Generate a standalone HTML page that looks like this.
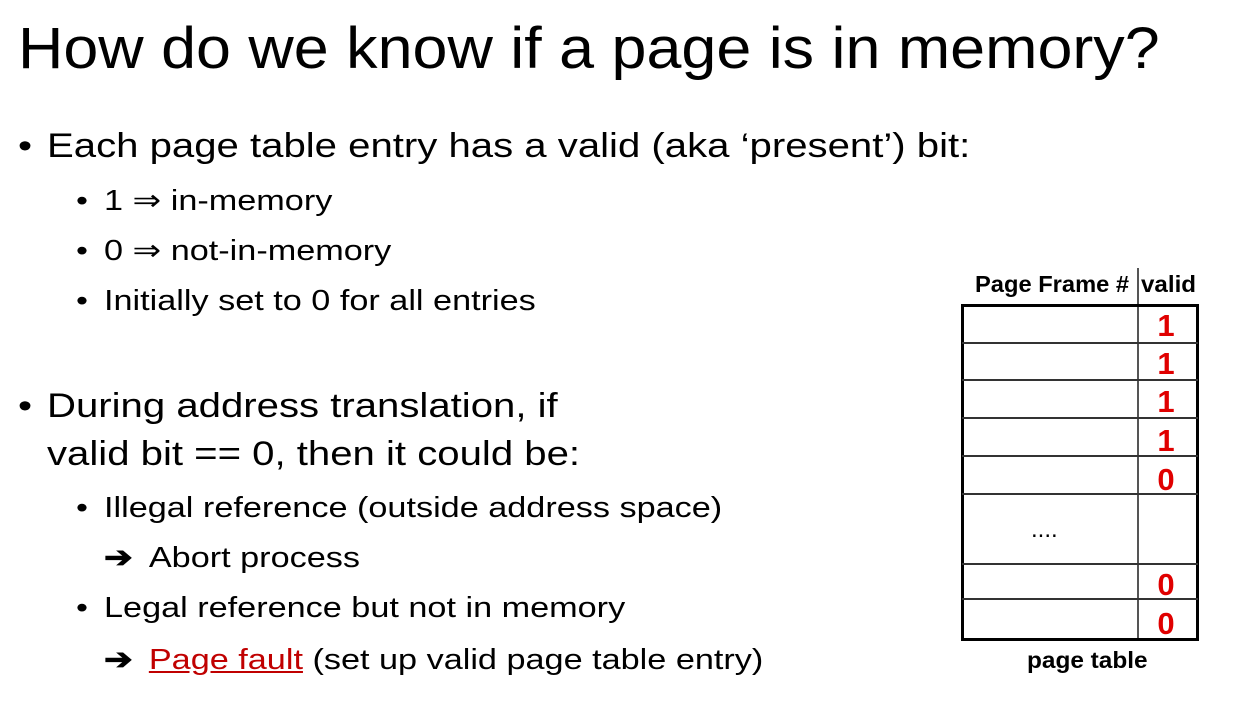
<!DOCTYPE html>
<html><head><style>
body{margin:0;width:1250px;height:715px;background:#fff;position:relative;overflow:hidden;font-family:"Liberation Sans",Arial,sans-serif;color:#000}
.t{position:absolute;white-space:nowrap;line-height:1;transform-origin:0 0}
.l1{font-size:34px;transform:scaleX(1.18)}
.l2{font-size:29px;transform:scaleX(1.18)}
.red{color:#e00000;font-weight:bold;font-size:31px;position:absolute;width:60px;text-align:center;left:1136px;line-height:1}
.hl{position:absolute;left:962px;width:236px;height:1.5px;background:#333}
.ar{font-weight:bold;display:inline-block;width:38px}
</style></head><body>
<div class="t" style="left:18px;top:20px;font-size:58px;transform:scaleX(1.083)">How do we know if a page is in memory?</div>

<div class="t l1" style="left:18px;top:129px">•</div>
<div class="t l1" style="left:47px;top:129px">Each page table entry has a valid (aka ‘present’) bit:</div>
<div class="t l2" style="left:76px;top:187px">•</div>
<div class="t l2" style="left:104px;top:187px">1 ⇒ in-memory</div>
<div class="t l2" style="left:76px;top:237px">•</div>
<div class="t l2" style="left:104px;top:237px">0 ⇒ not-in-memory</div>
<div class="t l2" style="left:76px;top:287px">•</div>
<div class="t l2" style="left:104px;top:287px">Initially set to 0 for all entries</div>

<div class="t l1" style="left:18px;top:389px">•</div>
<div class="t l1" style="left:47px;top:389px">During address translation, if</div>
<div class="t l1" style="left:47px;top:437px">valid bit == 0, then it could be:</div>
<div class="t l2" style="left:76px;top:494px">•</div>
<div class="t l2" style="left:104px;top:494px">Illegal reference (outside address space)</div>
<div class="t l2" style="left:104px;top:544px"><span class="ar">➔</span>Abort process</div>
<div class="t l2" style="left:76px;top:594px">•</div>
<div class="t l2" style="left:104px;top:594px">Legal reference but not in memory</div>
<div class="t l2" style="left:104px;top:646px"><span class="ar">➔</span><span style="color:#c00000;text-decoration:underline">Page fault</span> (set up valid page table entry)</div>

<div class="t" style="left:975px;top:273px;font-size:23px;font-weight:bold;transform:scaleX(1.03)">Page Frame #</div>
<div class="t" style="left:1141px;top:273px;font-size:23px;font-weight:bold;transform:scaleX(1.05)">valid</div>
<div style="position:absolute;left:1137px;top:268px;width:1.5px;height:370px;background:#555"></div>
<div style="position:absolute;left:961px;top:304px;width:232px;height:331px;border:3px solid #000"></div>
<div class="hl" style="top:342px"></div>
<div class="hl" style="top:379px"></div>
<div class="hl" style="top:417px"></div>
<div class="hl" style="top:455px"></div>
<div class="hl" style="top:493px"></div>
<div class="hl" style="top:563px"></div>
<div class="hl" style="top:598px"></div>
<div class="red" style="top:310px">1</div>
<div class="red" style="top:348px">1</div>
<div class="red" style="top:386px">1</div>
<div class="red" style="top:425px">1</div>
<div class="red" style="top:464px">0</div>
<div class="red" style="top:569px">0</div>
<div class="red" style="top:608px">0</div>
<div class="t" style="left:1031px;top:518px;font-size:24px">....</div>
<div class="t" style="left:1027px;top:649px;font-size:23px;font-weight:bold;transform:scaleX(1.06)">page table</div>
</body></html>
